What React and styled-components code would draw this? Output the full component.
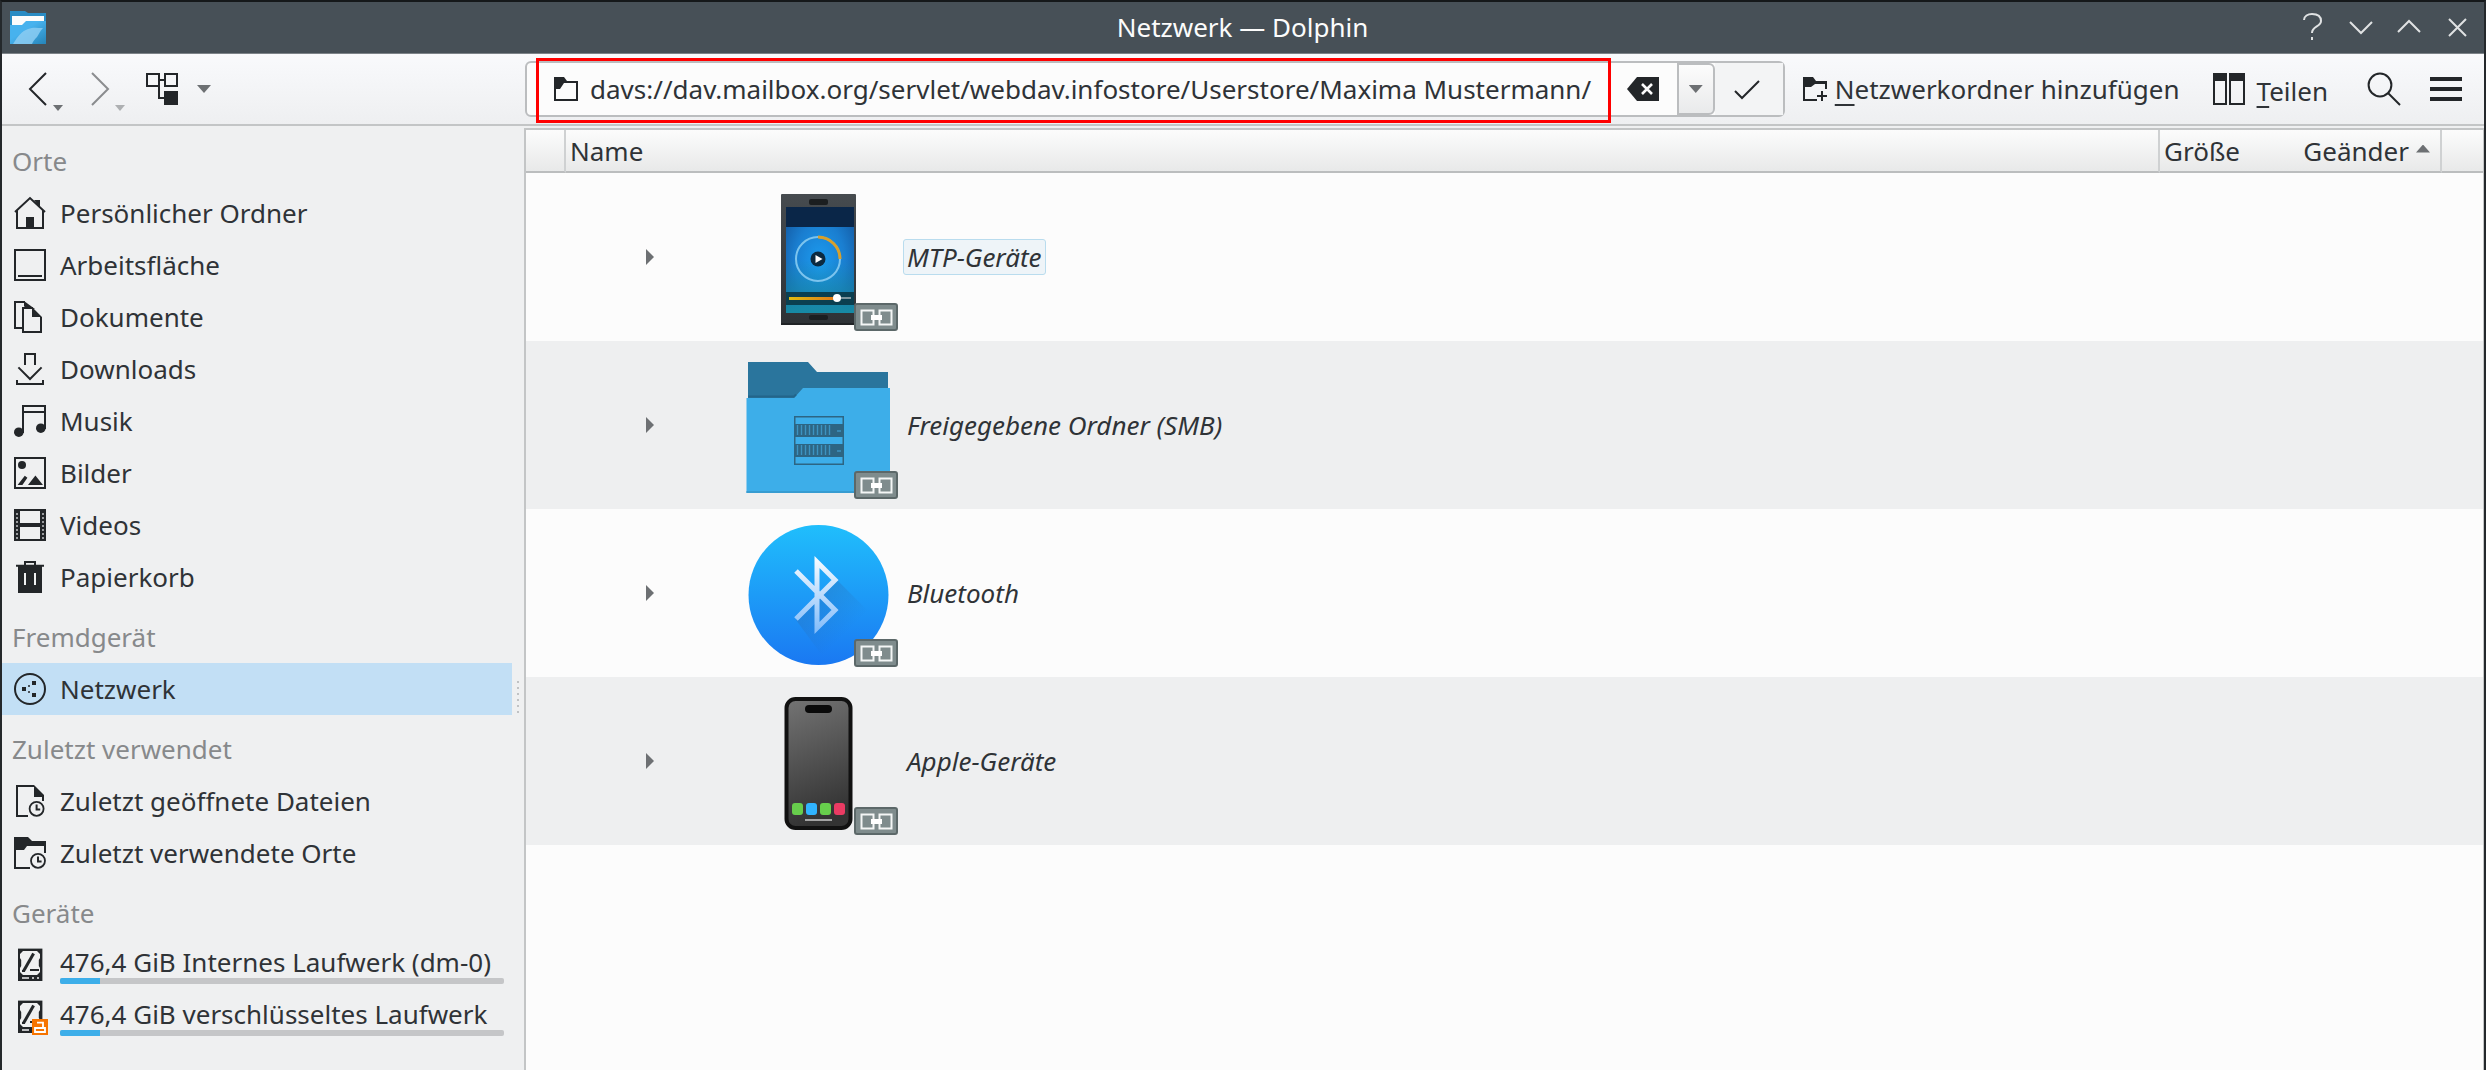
import React from 'react';
import styled, { createGlobalStyle } from 'styled-components';

const places = [
  {
    title: 'Orte',
    items: [
      { label: 'Persönlicher Ordner', icon: 'home' },
      { label: 'Arbeitsfläche', icon: 'desktop' },
      { label: 'Dokumente', icon: 'documents' },
      { label: 'Downloads', icon: 'downloads' },
      { label: 'Musik', icon: 'music' },
      { label: 'Bilder', icon: 'images' },
      { label: 'Videos', icon: 'videos' },
      { label: 'Papierkorb', icon: 'trash' },
    ],
  },
  {
    title: 'Fremdgerät',
    items: [{ label: 'Netzwerk', icon: 'network', selected: true }],
  },
  {
    title: 'Zuletzt verwendet',
    items: [
      { label: 'Zuletzt geöffnete Dateien', icon: 'recentFiles' },
      { label: 'Zuletzt verwendete Orte', icon: 'recentPlaces' },
    ],
  },
  {
    title: 'Geräte',
    items: [
      { label: '476,4 GiB Internes Laufwerk (dm-0)', icon: 'drive', usage: 9 },
      { label: '476,4 GiB verschlüsseltes Laufwerk', icon: 'lockedDrive', usage: 9 },
    ],
  },
];

const DriveShape = () => (
  <>
    <path d="M5 2.800h12.200V19H5z" fill="#232629" stroke="none" />
    <path
      d="M7.500 4h7l1.500 1.500v2l-.6 1v3l.6 1v2L14.500 16h-7L6 14.500v-2l.6-1v-3L6 7.500v-2z"
      fill="#eff0f1"
      stroke="none"
    />
    <path d="M12.800 5.300L7.800 14" strokeWidth="1.500" />
    <path d="M11 13.500h4.500M7 14h1.500" />
    <path d="M7 17.500h3.500M12 17.500h1M14.500 17.500h1" stroke="#eff0f1" strokeWidth=".8" />
  </>
);

const icons = {
  home: (
    <>
      <path d="M3.500 10.500L11 3.500l7.500 7M4.500 9.800v8.700h13V9.800" />
      <path d="M9 13h4v5H9zM13 4.500h3v4z" fill="#232629" stroke="none" />
    </>
  ),
  desktop: <path d="M3.500 3.500h15v15h-15zM5 16.500h12" />,
  documents: (
    <>
      <path d="M7.500 16.500h-4v-13h5M12.500 6.500h-5v12h9V11" />
      <path d="M8 3l5.500 4H9L8 5.500zM12 6l5 5h-5z" fill="#232629" stroke="none" />
    </>
  ),
  downloads: <path d="M8.500 9V3.500h5V9M5.200 10.200l5.800 5.800 5.800-5.800M4.500 16.500v2h13v-2" />,
  music: (
    <>
      <path d="M7.500 17V3.500h11V15M7.500 6.500h11" />
      <circle cx="5.400" cy="16.600" r="2.400" fill="#232629" stroke="none" />
      <circle cx="16.400" cy="14.600" r="2.400" fill="#232629" stroke="none" />
    </>
  ),
  images: (
    <>
      <path d="M3.500 3.500h15v15h-15z" />
      <circle cx="7" cy="7" r="2" fill="#232629" stroke="none" />
      <path d="M4.800 17l3.600-4.600 1.300 1L7.200 17zM10 17l3.700-4.700L17.500 17z" fill="#232629" stroke="none" />
    </>
  ),
  videos: (
    <>
      <path d="M3 3.500h16M3 18.500h16" />
      <path d="M3 3h3v16H3zM16 3h3v16h-3zM6 10h10v2H6z" fill="#232629" stroke="none" />
      <path d="M4.500 5v13M17.500 5v13" stroke="#b9bbbd" strokeWidth=".8" strokeDasharray="1 1" />
    </>
  ),
  trash: (
    <>
      <path d="M8.500 5V3.500h5V5" />
      <path d="M4 4.900h14v1H17V19H5V5.900H4z" fill="#232629" stroke="none" />
      <path d="M8.500 9v6M13.500 9v6" stroke="#eff0f1" />
    </>
  ),
  network: (
    <>
      <circle cx="11" cy="11" r="7.500" />
      <path d="M7 10h2v2H7zM12 7h2v2h-2zM12 13h2v2h-2z" fill="#232629" stroke="none" />
      <path d="M10 9.500h1M10 12.500h1" strokeWidth=".8" />
    </>
  ),
  recentFiles: (
    <>
      <path d="M10 18.500H4.500v-15H13M17.500 8v3" />
      <path d="M13 3l5 5v1h-5z" fill="#232629" stroke="none" />
      <circle cx="14.300" cy="14.900" r="3.500" strokeWidth=".9" />
      <path d="M14.300 12.800v2.500h1.800" />
    </>
  ),
  recentPlaces: (
    <>
      <path d="M3.500 9v9.500H11M18.500 7v4" />
      <path d="M3 3h7l2 2h7v2.500h-9.500L8 9.500H3z" fill="#232629" stroke="none" />
      <circle cx="15" cy="14.900" r="3.500" strokeWidth=".9" />
      <path d="M15 12.800v2.500h1.800" />
    </>
  ),
  drive: <DriveShape />,
  lockedDrive: (
    <>
      <DriveShape />
      <path d="M12 12h8v8h-8z" fill="#f67400" stroke="none" />
      <path d="M14.500 13.800h3v2.700M13.500 16.500h5v2h-5z" stroke="#fff" strokeWidth=".9" />
    </>
  ),
};

const Emblem = () => (
  <g>
    <rect x="117" y="127" width="42" height="26" rx="2" fill="#7f8c8d" stroke="#5c6869" strokeWidth="2" />
    <path d="M123.500 133.500h12v14h-12zM141.500 133.500h12v14h-12z" fill="none" stroke="#f4f6f6" strokeWidth="2" />
    <path d="M133 140.500h11" stroke="#fff" strokeWidth="5" />
  </g>
);

const PhoneIcon = () => (
  <svg width="160" height="160" viewBox="0 0 160 160" aria-hidden="true">
    <defs>
      <radialGradient id="screen" cx="50%" cy="52%" r="62%">
        <stop offset="0" stopColor="#1c9cf0" />
        <stop offset=".6" stopColor="#1a7ed0" />
        <stop offset="1" stopColor="#145ea8" />
      </radialGradient>
      <linearGradient id="teal" x1="0" y1="0" x2="0" y2="1">
        <stop offset=".5" stopColor="#178aa4" stopOpacity="0" />
        <stop offset="1" stopColor="#178aa4" />
      </linearGradient>
      <linearGradient id="phoneBody" x1="0" y1="0" x2="0" y2="1">
        <stop offset="0" stopColor="#464b4f" />
        <stop offset="1" stopColor="#2e3236" />
      </linearGradient>
      <linearGradient id="track" x1="0" y1="0" x2="1" y2="0">
        <stop offset="0" stopColor="#e0bc10" />
        <stop offset="1" stopColor="#e07a18" />
      </linearGradient>
    </defs>
    <rect x="43" y="17" width="75" height="131" rx="1" fill="url(#phoneBody)" />
    <rect x="43" y="146" width="75" height="2" fill="#202326" />
    <rect x="71" y="22" width="19" height="6" rx="2" fill="#1b1e20" />
    <rect x="71" y="138" width="19" height="5" rx="2" fill="#1b1e20" />
    <rect x="48" y="30" width="68" height="106" fill="url(#screen)" />
    <rect x="48" y="30" width="68" height="106" fill="url(#teal)" />
    <rect x="48" y="30" width="68" height="20" fill="#0a2648" />
    <circle cx="80" cy="82" r="22" fill="none" stroke="#7cc4ee" strokeWidth="2" />
    <path d="M80 60a22 22 0 0 1 22 22" fill="none" stroke="#d8a02c" strokeWidth="3" />
    <circle cx="80" cy="82" r="7.500" fill="#0c2a40" />
    <path d="M77.500 78l7 4-7 4z" fill="#fff" />
    <rect x="48" y="115" width="68" height="13" fill="#0b3f50" />
    <rect x="51" y="120" width="46" height="3" fill="url(#track)" />
    <rect x="97" y="120" width="16" height="2" fill="#7d949c" />
    <circle cx="99" cy="121" r="4" fill="#fff" />
    <Emblem />
  </svg>
);

const ShareFolderIcon = () => (
  <svg width="160" height="160" viewBox="0 0 160 160" aria-hidden="true">
    <path d="M10 17h60l9 10h71v40H10z" fill="#2a759d" />
    <path d="M8.500 53H56l9-10h87v105H8.500z" fill="#3daee9" />
    <path d="M10 51.500h46l2-2" fill="none" stroke="#23658a" strokeWidth="2" />
    <path d="M8.500 147h143.500" stroke="#379cd1" strokeWidth="2" />
    <g fill="#2d6583">
      <path d="M56 71h50v49H56zM57.500 72.500v46h47v-46z" fillRule="evenodd" />
      <path d="M56 79h50v13H56zM56 99h50v13H56z" />
    </g>
    <path
      d="M59.500 80v10M63.500 80v10M67.500 80v10M71.500 80v10M75.500 80v10M79.500 80v10M83.500 80v10M87.500 80v10M91.500 80v10M59.500 100v10M63.500 100v10M67.500 100v10M71.500 100v10M75.500 100v10M79.500 100v10M83.500 100v10M87.500 100v10M91.500 100v10M99 86h4M99 106h4"
      stroke="#3c93c1"
      strokeWidth="1.400"
    />
    <Emblem />
  </svg>
);

const BluetoothIcon = () => (
  <svg width="160" height="160" viewBox="0 0 160 160" aria-hidden="true">
    <defs>
      <linearGradient id="disc" x1="0" y1="0" x2="0" y2="1">
        <stop offset="0" stopColor="#20befc" />
        <stop offset="1" stopColor="#1a78f2" />
      </linearGradient>
      <linearGradient id="rune" gradientUnits="userSpaceOnUse" x1="0" y1="47" x2="0" y2="118">
        <stop offset="0" stopColor="#f4faff" />
        <stop offset="1" stopColor="#84bdfa" />
      </linearGradient>
      <linearGradient id="runeShadow" gradientUnits="userSpaceOnUse" x1="80" y1="80" x2="114" y2="114">
        <stop offset="0" stopColor="#2a6fb8" stopOpacity=".4" />
        <stop offset="1" stopColor="#2a6fb8" stopOpacity="0" />
      </linearGradient>
    </defs>
    <circle cx="80.500" cy="82" r="70" fill="url(#disc)" />
    <path d="M99 67l42 42-36 38-16 2-31-42 20-24z" fill="url(#runeShadow)" />
    <path d="M58 58l39 39-18 18V49l18 18-39 39" fill="none" stroke="url(#rune)" strokeWidth="5" />
    <Emblem />
  </svg>
);

const ApplePhoneIcon = () => (
  <svg width="160" height="160" viewBox="0 0 160 160" aria-hidden="true">
    <defs>
      <linearGradient id="glass" x1="0" y1="0" x2=".2" y2="1">
        <stop offset="0" stopColor="#747474" />
        <stop offset="1" stopColor="#333" />
      </linearGradient>
    </defs>
    <rect x="48.500" y="18" width="64" height="129" rx="9" fill="url(#glass)" stroke="#111" strokeWidth="4" />
    <rect x="67" y="24" width="27" height="8" rx="4" fill="#0a0a0a" />
    <rect x="54" y="122" width="11" height="12" rx="3" fill="#67ce4c" />
    <rect x="68" y="122" width="11" height="12" rx="3" fill="#30b4ff" />
    <rect x="82" y="122" width="11" height="12" rx="3" fill="#67ce4c" />
    <rect x="96" y="122" width="11" height="12" rx="3" fill="#ea3b63" />
    <rect x="67" y="138" width="27" height="2" fill="#a4a4a4" />
    <Emblem />
  </svg>
);

const devices = [
  { name: 'MTP-Geräte', icon: <PhoneIcon />, focused: true },
  { name: 'Freigegebene Ordner (SMB)', icon: <ShareFolderIcon /> },
  { name: 'Bluetooth', icon: <BluetoothIcon /> },
  { name: 'Apple-Geräte', icon: <ApplePhoneIcon /> },
];

const windowButtons = [
  { label: 'Hilfe', path: 'M15 18c0-4 4-6 8-6 5 0 9 2 9 7 0 6-9 5-9 12M23 35v3' },
  { label: 'Minimieren', path: 'M13 20l11 11 11-11' },
  { label: 'Maximieren', path: 'M13 30l11-11 11 11' },
  { label: 'Schließen', path: 'M16 17l17 17M33 17L16 34' },
];

function App() {
  return (
    <Window>
      <GlobalStyle />
      <TitleBar>
        <AppLogo width="38" height="36" viewBox="0 0 38 36" aria-hidden="true">
          <defs>
            <linearGradient id="logo" x1="0" y1="0" x2="1" y2="1">
              <stop offset=".4" stopColor="#47b2ee" />
              <stop offset="1" stopColor="#2684b8" />
            </linearGradient>
          </defs>
          <path d="M1 1h15l3 2h18v14H1z" fill="#2a8cc4" />
          <path d="M3 6h32v12H3z" fill="#fcfcfc" />
          <path d="M1 15h12l4-4h20v23H1z" fill="url(#logo)" />
          <path d="M4 34c5-8 9-13 15-15 5-2 9-1 15-1-3 3-4 6-6 9-2 2-4 4-5 7z" fill="#8ccdf2" opacity=".85" />
        </AppLogo>
        <Title>Netzwerk — Dolphin</Title>
        <WindowControls>
          {windowButtons.map((button) => (
            <WindowButton key={button.label} aria-label={button.label}>
              <svg width="48" height="52" viewBox="0 0 48 52" fill="none" stroke="#e0e2e3" strokeWidth="2">
                <path d={button.path} />
              </svg>
            </WindowButton>
          ))}
        </WindowControls>
      </TitleBar>

      <ToolBar>
        <NavTools>
          <NavButton aria-label="Zurück">
            <Glyph><path d="M19 3l-8 8 8 8" /></Glyph>
            <Triangle $w={10} $h={6} />
          </NavButton>
          <NavButton aria-label="Vor" disabled>
            <Glyph><path d="M11 3l8 8-8 8" /></Glyph>
            <Triangle $w={10} $h={6} />
          </NavButton>
          <ViewButton aria-label="Ansicht">
            <Glyph>
              <path d="M3.500 3.500h6v6h-6zM12.500 3.500h6v6h-6zM9.500 6.500h3M9.500 9.500v6H12" />
              <path d="M12 12h7v7h-7z" fill="#232629" stroke="none" />
            </Glyph>
            <Triangle $w={14} $h={8} />
          </ViewButton>
        </NavTools>

        <LocationBar>
          <SmallGlyph>
            <path d="M2.500 6v7.500h11V4.500H7" />
            <path d="M2 2h5l1.500 2H14v1H7L5 8H2z" fill="#232629" stroke="none" />
          </SmallGlyph>
          <LocationInput
            type="text"
            aria-label="Adresse"
            defaultValue="davs://dav.mailbox.org/servlet/webdav.infostore/Userstore/Maxima Mustermann/"
          />
          <ClearButton aria-label="Leeren">
            <Glyph>
              <path d="M3 11l5-6h11v12H8z" fill="#232629" stroke="none" />
              <path d="M10.500 8.500l5 5M15.500 8.500l-5 5" stroke="#fcfcfc" strokeWidth="1.300" />
            </Glyph>
          </ClearButton>
          <HistoryButton aria-label="Verlauf">
            <Triangle $w={14} $h={8} />
          </HistoryButton>
          <ConfirmButton aria-label="Übernehmen">
            <Glyph><path d="M5 12l3.500 3.500L17 7" /></Glyph>
          </ConfirmButton>
          <Highlight />
        </LocationBar>

        <Actions>
          <AddButton>
            <SmallGlyph>
              <path d="M2.500 6v7.500H9M13.500 4.500V8" />
              <path d="M2 2h5l1.500 2H14v1.500H8L6 7H2z" fill="#232629" stroke="none" />
              <path d="M9 11.500h5M11.500 9v5" />
            </SmallGlyph>
            <span><u>N</u>etzwerkordner hinzufügen</span>
          </AddButton>
          <SplitButton>
            <Glyph>
              <path d="M3.500 3.500h6v15h-6zM11.500 3.500h7v15h-7z" />
              <path d="M3 3h7v4H3zM11 3h8v4h-8z" fill="#232629" stroke="none" />
            </Glyph>
            <span><u>T</u>eilen</span>
          </SplitButton>
          <IconButton aria-label="Suchen">
            <Glyph>
              <circle cx="9" cy="9" r="5.700" />
              <path d="M13 13l6 6" />
            </Glyph>
          </IconButton>
          <MenuButton aria-label="Menü">
            <Glyph><path d="M3 6h16M3 11h16M3 16h16" strokeWidth="2" /></Glyph>
          </MenuButton>
        </Actions>
      </ToolBar>

      <Main>
        <Sidebar>
          {places.map((group) => (
            <section key={group.title}>
              <GroupTitle>{group.title}</GroupTitle>
              <PlaceList>
                {group.items.map((item) => (
                  <li key={item.label}>
                    <Place href="#" $selected={item.selected}>
                      <Glyph>{icons[item.icon]}</Glyph>
                      <PlaceText $compact={item.usage}>
                        <span>{item.label}</span>
                        {item.usage && (
                          <Usage>
                            <UsageFill style={{ width: `${item.usage}%` }} />
                          </Usage>
                        )}
                      </PlaceText>
                    </Place>
                  </li>
                ))}
              </PlaceList>
            </section>
          ))}
        </Sidebar>
        <Splitter>
          {[0, 1, 2, 3, 4, 5].map((dot) => <Dot key={dot} />)}
        </Splitter>

        <View>
          <Table>
            <colgroup>
              <Col $w={40} />
              <col />
              <Col $w={130} />
              <Col $w={152} />
              <Col $w={41} />
            </colgroup>
            <thead>
              <tr>
                <HeadCell $line />
                <HeadCell $line>Name</HeadCell>
                <HeadCell>Größe</HeadCell>
                <HeadCell $line $end>
                  <SortLabel>
                    Geänder
                    <SortArrow />
                  </SortLabel>
                </HeadCell>
                <HeadCell />
              </tr>
            </thead>
            <tbody>
              {devices.map((device) => (
                <Row key={device.name}>
                  <td colSpan={2}>
                    <NameCell>
                      <Expander aria-label="Aufklappen" />
                      {device.icon}
                      <DeviceName $focused={device.focused}>{device.name}</DeviceName>
                    </NameCell>
                  </td>
                  <td />
                  <td />
                  <td />
                </Row>
              ))}
            </tbody>
          </Table>
        </View>
      </Main>
    </Window>
  );
}

export default App

const Glyph = styled.svg.attrs({ viewBox: '0 0 22 22', 'aria-hidden': true })`
  width: 44px;
  height: 44px;
  flex: none;
  fill: none;
  stroke: #232629;
`

const SmallGlyph = styled(Glyph).attrs({ viewBox: '0 0 16 16' })`
  width: 32px;
  height: 32px;
`

const GlobalStyle = createGlobalStyle`
  * {
    box-sizing: border-box;
  }
  body {
    margin: 0;
    background: #eff0f1;
  }
  body, button, input {
    font-family: 'Noto Sans', sans-serif;
    font-size: 26px;
    line-height: 36px;
    color: #2f3337;
  }
  button {
    border: 0;
    padding: 0;
    background: none;
    display: flex;
    align-items: center;
  }
`

const Window = styled.div`
  min-height: 100vh;
  display: flex;
  flex-direction: column;
  border: 2px solid #24282b;
  border-top-color: #15181a;
  border-bottom: 0;
`

const TitleBar = styled.header`
  height: 52px;
  display: flex;
  align-items: center;
  background: #475057;
  border-bottom: 1px solid #7d8388;
  color: #fcfcfc;
`

const AppLogo = styled.svg`
  margin-left: 7px;
`

const Title = styled.div`
  flex: 1;
  text-align: center;
  padding: 0 0 2px 149px;
`

const WindowControls = styled.div`
  display: flex;
  padding-right: 3px;
`

const WindowButton = styled.button`
  width: 48px;
`

const ToolBar = styled.div`
  height: 72px;
  display: flex;
  align-items: center;
  background: linear-gradient(#f9fafc, #eeeff1);
  border-bottom: 2px solid #c3c5c6;
`

const NavTools = styled.div`
  width: 523px;
  flex: none;
  display: flex;
  align-items: center;
`

const Triangle = styled.span`
  width: ${props => props.$w}px;
  height: ${props => props.$h}px;
  flex: none;
  background: #6d7073;
  clip-path: polygon(0 0, 100% 0, 50% 100%);
`

const NavButton = styled.button`
  width: 62px;
  padding-left: 6px;
  &:disabled {
    opacity: 0.5;
  }
  ${Triangle} {
    align-self: flex-end;
    margin-left: 1px;
  }
`

const ViewButton = styled.button`
  margin-left: 14px;
  gap: 13px;
`

const LocationBar = styled.div`
  position: relative;
  flex: 1;
  height: 56px;
  display: flex;
  align-items: center;
  padding-left: 23px;
  border: 2px solid #bbbdbf;
  border-radius: 6px;
  background: #fcfcfc;
`

const LocationInput = styled.input`
  flex: 1;
  min-width: 0;
  border: 0;
  padding: 0 0 0 8px;
  outline: 0;
  background: none;
`

const ClearButton = styled.button`
  margin-right: 12px;
`

const HistoryButton = styled.button`
  width: 38px;
  height: 52px;
  justify-content: center;
  border: 2px solid #bbbdbf;
  border-radius: 0 6px 6px 0;
  background: linear-gradient(#fcfcfc, #e9eaeb);
`

const ConfirmButton = styled.button`
  width: 68px;
  height: 52px;
  padding-left: 10px;
  background: #f3f4f5;
`

// red marker drawn around the address
const Highlight = styled.span`
  position: absolute;
  top: -5px;
  bottom: -8px;
  left: 9px;
  right: 172px;
  border: 3px solid #ff0000;
  pointer-events: none;
`

const Actions = styled.div`
  flex: none;
  display: flex;
  align-items: center;
  padding: 0 16px 0 14px;

  u {
    text-underline-offset: 5px;
    text-decoration-thickness: 2px;
  }
`

const AddButton = styled.button`
  gap: 4px;
`

const SplitButton = styled.button`
  margin-left: 27px;
  gap: 6px;
  span {
    padding-top: 4px;
  }
`

const IconButton = styled.button`
  margin-left: 34px;
`

const MenuButton = styled.button`
  margin-left: 18px;
`

const Main = styled.div`
  flex: 1;
  display: flex;
`

const Sidebar = styled.nav`
  width: 510px;
  flex: none;
  padding-top: 1px;
`

const GroupTitle = styled.h2`
  height: 60px;
  margin: 0;
  padding: 16px 10px 0;
  font-size: 26px;
  font-weight: 400;
  color: #87898b;
`

const PlaceList = styled.ul`
  list-style: none;
  margin: 0;
  padding: 0;
`

const Place = styled.a`
  height: 52px;
  display: flex;
  align-items: center;
  gap: 8px;
  padding: 0 8px 0 6px;
  color: inherit;
  text-decoration: none;
  background: ${props => props.$selected ? '#c2dff5' : 'none'};
`

const PlaceText = styled.div`
  flex: 1;
  display: flex;
  flex-direction: column;
  white-space: nowrap;
  line-height: ${props => props.$compact ? 32 : 36}px;
`

const Usage = styled.div`
  height: 6px;
  border-radius: 2px;
  background: #c5c6c8;
  overflow: hidden;
`

const UsageFill = styled.div`
  height: 6px;
  background: #3daee9;
`

const Splitter = styled.div`
  width: 12px;
  flex: none;
  display: flex;
  flex-direction: column;
  align-items: center;
  gap: 4px;
  padding-top: 555px;
`

const Dot = styled.span`
  width: 2px;
  height: 2px;
  background: #c0c2c4;
`

const View = styled.main`
  flex: 1;
  margin-top: 2px;
  border: 2px solid #c3c5c6;
  border-bottom: 0;
  border-right-width: 1px;
  background: #fcfcfc;
`

const Table = styled.table`
  width: 100%;
  table-layout: fixed;
  border-collapse: separate;
  border-spacing: 0;
  td {
    padding: 0;
  }
`

const Col = styled.col`
  width: ${props => props.$w}px;
`

const HeadCell = styled.th`
  height: 43px;
  padding: ${props => props.$end ? '0 10px 0 0' : '0 0 0 4px'};
  text-align: left;
  font-weight: 400;
  background: linear-gradient(#fcfcfc, #e8e9e9);
  border-bottom: 2px solid #bbbdbe;
  border-right: ${props => props.$line ? '2px solid #cfd1d2' : '0'};
`

const SortLabel = styled.div`
  display: flex;
  justify-content: flex-end;
  gap: 7px;
`

const SortArrow = styled.span`
  width: 14px;
  height: 8px;
  margin-top: 12px;
  background: #6d7073;
  clip-path: polygon(50% 0, 100% 100%, 0 100%);
`

const Row = styled.tr`
  height: 168px;
  &:nth-child(even) {
    background: #eeeff0;
  }
`

const NameCell = styled.div`
  display: flex;
  align-items: center;
`

const Expander = styled.button`
  width: 8px;
  height: 16px;
  margin: 0 84px 0 120px;
  background: #6d7073;
  clip-path: polygon(0 0, 100% 50%, 0 100%);
`

const DeviceName = styled.span`
  margin-left: 5px;
  padding: 0 3px;
  font-style: italic;
  line-height: 34px;
  border: 1px solid ${props => props.$focused ? '#b9dcee' : 'transparent'};
  border-radius: 3px;
  background: ${props => props.$focused ? '#eef4f8' : 'none'};
`
